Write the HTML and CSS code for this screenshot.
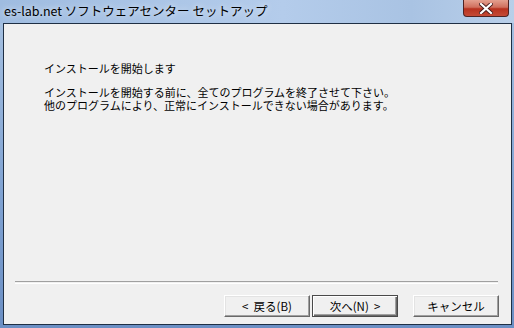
FILE: index.html
```html
<!DOCTYPE html>
<html lang="ja">
<head>
  <meta charset="utf-8" />
  <title>es-lab.net ソフトウェアセンター セットアップ</title>
  <link rel="stylesheet" href="styles.css">
</head>
<body>
  <div class="window">
    <div class="titlebar">
      <span class="title">es-lab.net ソフトウェアセンター セットアップ</span>
      <div class="close">
        <svg width="14" height="11" viewBox="0 0 14 11">
          <path d="M2 1 L12 10 M12 1 L2 10" stroke="#4a1d1d" stroke-width="4" stroke-linecap="square"/>
          <path d="M2 1 L12 10 M12 1 L2 10" stroke="#fff" stroke-width="2.2" stroke-linecap="square"/>
        </svg>
      </div>
    </div>
    <div class="client">
      <div class="content">
        <p class="heading">インストールを開始します</p>
        <p class="message">インストールを開始する前に、全てのプログラムを終了させて下さい。</p>
        <p class="message">他のプログラムにより、正常にインストールできない場合があります。</p>
      </div>
      <div class="separator"></div>
      <div class="buttons">
        <button class="btn">&lt;&nbsp; 戻る(B)</button>
        <button class="btn default">次へ(N)&nbsp; &gt;</button>
        <button class="btn cancel">キャンセル</button>
      </div>
    </div>
  </div>
</body>
</html>
```

FILE: styles.css
```css
body {
  margin: 0;
  font-family: "Noto Sans CJK JP", "Noto Sans", sans-serif;
}
.window {
  width: 514px;
  height: 328px;
  box-sizing: border-box;
  padding: 0 2px 3px 3px;
  background: linear-gradient(to bottom, #a9c3e2, #7fa2d2 60%, #6b8fc4);
  display: flex;
  flex-direction: column;
  position: relative;
}
.titlebar {
  height: 23px;
  background: linear-gradient(to right, #9fbce0 0%, #b4cceb 55%, #a9c3e3 80%, #b9cfe9 100%);
  margin: 0 -2px 0 -3px;
  padding-left: 4px;
  display: flex;
  align-items: flex-start;
}
.title {
  font-size: 12.5px;
  line-height: 21px;
  color: #000;
  text-shadow: 0 0 6px rgba(255,255,255,0.9);
  white-space: nowrap;
}
.close {
  position: absolute;
  top: 0;
  left: 463px;
  width: 44px;
  height: 16px;
  border: 1px solid #4f2323;
  border-top: none;
  border-radius: 0 0 4px 4px;
  background: linear-gradient(to bottom, #e4a08f 0%, #d0705e 45%, #b8321f 55%, #c44a36 100%);
  display: flex;
  align-items: center;
  justify-content: center;
}
.client {
  flex: 1;
  background: #f0f0f0;
  border: 1px solid #1f2f44;
  display: flex;
  flex-direction: column;
}
.content {
  flex: 1;
  padding: 38px 0 0 40px;
  font-size: 11px;
  color: #000;
}
.content p {
  margin: 0;
  height: 13px;
  line-height: 13px;
  white-space: nowrap;
}
.heading {
  margin-bottom: 11px !important;
}
.separator {
  margin: 0 13px 0 11px;
  height: 1px;
  border-top: 1px solid #a0a0a0;
  border-bottom: 1px solid #fff;
}
.buttons {
  display: flex;
  justify-content: flex-end;
  padding: 11px 12px 7px 0;
}
.btn {
  width: 86px;
  height: 22px;
  margin: 0;
  padding: 0;
  font-family: "Noto Sans CJK JP", sans-serif;
  font-size: 11.5px;
  color: #000;
  background: #f0f0f0;
  border: 1px solid;
  border-color: #fff #696969 #696969 #fff;
  box-shadow: inset -1px -1px 0 #a0a0a0, inset 1px 1px 0 #e3e3e3;
}
.default {
  margin-left: 2px;
  border: 1px solid #4a4a4a;
  box-shadow: inset 1px 1px 0 #fff, inset -1px -1px 0 #696969, inset -2px -2px 0 #a0a0a0;
}
.cancel {
  margin-left: 15px;
}
```
